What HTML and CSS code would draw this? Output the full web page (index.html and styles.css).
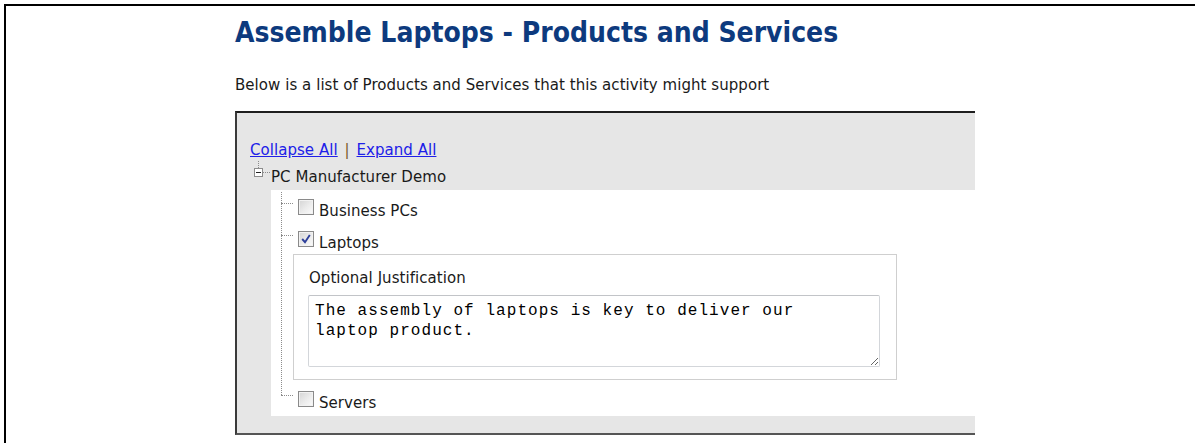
FILE: index.html
```html
<!DOCTYPE html>
<html lang="en">
<head>
<meta charset="utf-8">
<title>Assemble Laptops - Products and Services</title>
<link rel="stylesheet" href="styles.css">
</head>
<body>
<div class="frame">
  <div class="content">
    <h1 class="title">Assemble Laptops - Products and Services</h1>
    <p class="intro">Below is a list of Products and Services that this activity might support</p>

    <div class="tree-box">
      <div class="tree-tools">
        <a href="#" class="tool-link">Collapse All</a>
        <span class="sep">|</span>
        <a href="#" class="tool-link">Expand All</a>
      </div>

      <div class="root-row">
        <span class="root-stem"></span>
        <svg class="toggle" width="9" height="9" viewBox="0 0 9 9">
          <rect x="0.5" y="0.5" width="8" height="8" fill="#fff" stroke="#8c8c8c"/>
          <line x1="2" y1="4.5" x2="7" y2="4.5" stroke="#222"/>
        </svg>
        <span class="root-link"></span>
        <span class="root-label">PC Manufacturer Demo</span>
      </div>

      <div class="children">
        <div class="branch">
          <div class="node">
            <span class="connector"></span>
            <span class="check"></span>
            <span class="node-label">Business PCs</span>
          </div>

          <div class="node">
            <span class="connector"></span>
            <span class="check">
              <svg width="12" height="12" viewBox="0 0 12 12">
                <path d="M2.2 6 L5 9.2 L9.8 2" fill="none" stroke="#2d3f9a" stroke-width="1.9"/>
              </svg>
            </span>
            <span class="node-label">Laptops</span>
          </div>

          <div class="justify">
            <label class="justify-label" for="just-laptops">Optional Justification</label>
            <textarea id="just-laptops" class="justify-text" spellcheck="false">The assembly of laptops is key to deliver our laptop product.</textarea>
          </div>

          <div class="node node-last">
            <span class="connector"></span>
            <span class="check"></span>
            <span class="node-label">Servers</span>
          </div>
        </div>
      </div>
    </div>
  </div>
</div>
</body>
</html>
```

FILE: styles.css
```css
html, body {
  margin: 0;
  padding: 0;
  background: #fff;
}

body {
  font-family: "DejaVu Sans", "Liberation Sans", sans-serif;
  font-size: 15px;
  letter-spacing: 0.05px;
  color: #1a1a1a;
}

.frame {
  margin: 4px 0 0 4px;
  height: 439px;
  border-top: 2px solid #000;
  border-left: 2px solid #000;
  box-sizing: border-box;
  overflow: hidden;
}

.content {
  padding-left: 229px;
}

.title {
  margin: 0;
  padding-top: 11px;
  font-family: "DejaVu Sans Condensed", "DejaVu Sans", sans-serif;
  font-size: 28px;
  letter-spacing: 0;
  line-height: 32px;
  font-weight: bold;
  color: #0d3a7e;
}

.intro {
  margin: 0;
  padding-top: 27px;
  line-height: 18px;
}

.tree-box {
  margin-top: 17px;
  width: 738px;
  background: #e6e6e6;
  border-top: 2px solid #1e1e1e;
  border-left: 2px solid #3a3a3a;
  border-bottom: 2px solid #555;
  padding: 27px 0 17px 0;
}

.tree-tools {
  padding-left: 13px;
  line-height: 20px;
}

.tool-link {
  color: #2020e8;
  text-decoration: underline;
}

.sep {
  color: #7a5a2a;
  margin: 0 2px;
}

.root-row {
  position: relative;
  display: flex;
  align-items: flex-start;
  height: 24px;
  margin-top: 5px;
  padding-left: 17px;
}

.root-stem {
  position: absolute;
  left: 21px;
  top: -4px;
  height: 7px;
  border-left: 1px dotted #8c8c8c;
}

.toggle {
  flex: none;
  margin-top: 3px;
}

.root-link {
  flex: none;
  width: 7px;
  margin-top: 7px;
  border-top: 1px dotted #8c8c8c;
}

.root-label {
  padding-left: 1px;
  line-height: 24px;
}

.children {
  margin-left: 34px;
  margin-top: 1px;
  background: #fff;
  padding: 10px 0 2px 10px;
}

.branch {
  position: relative;
}

.branch::before {
  content: "";
  position: absolute;
  left: 0;
  top: -8px;
  bottom: 19px;
  border-left: 1px dotted #8c8c8c;
}

.node {
  display: flex;
  align-items: center;
  height: 22px;
}

.node + .node {
  margin-top: 10px;
}

.node-last {
  margin-top: 12px;
}

.connector {
  flex: none;
  width: 12px;
  align-self: flex-start;
  margin-top: 3px;
  border-top: 1px dotted #8c8c8c;
}

.check {
  flex: none;
  align-self: flex-start;
  display: flex;
  align-items: center;
  justify-content: center;
  width: 14px;
  height: 14px;
  margin: -1px 0 0 5px;
  border: 1px solid #8a8a8a;
  background: linear-gradient(135deg, #d4d4d4 0%, #ececec 55%, #fbfbfb 100%);
  box-shadow: inset 0 0 0 1px #f2f2f2;
}

.check svg {
  display: block;
}

.node-label {
  padding-left: 5px;
}

.justify {
  margin-left: 12px;
  width: 604px;
  box-sizing: border-box;
  border: 1px solid #cfcfcf;
  background: #fff;
  padding: 13px 15px 12px 14px;
}

.justify-label {
  display: block;
  padding-left: 1px;
  line-height: 20px;
}

.justify-text {
  display: block;
  margin-top: 7px;
  width: 572px;
  height: 72px;
  box-sizing: border-box;
  padding: 5px 30px 3px 6px;
  border: 1px solid #d3d6da;
  border-top-color: #c2c4c8;
  border-radius: 2px;
  font-family: "Liberation Mono", monospace;
  font-size: 16px;
  letter-spacing: 1.05px;
  line-height: 20px;
  color: #000;
  background: #fff;
  resize: both;
  outline: none;
}
```
